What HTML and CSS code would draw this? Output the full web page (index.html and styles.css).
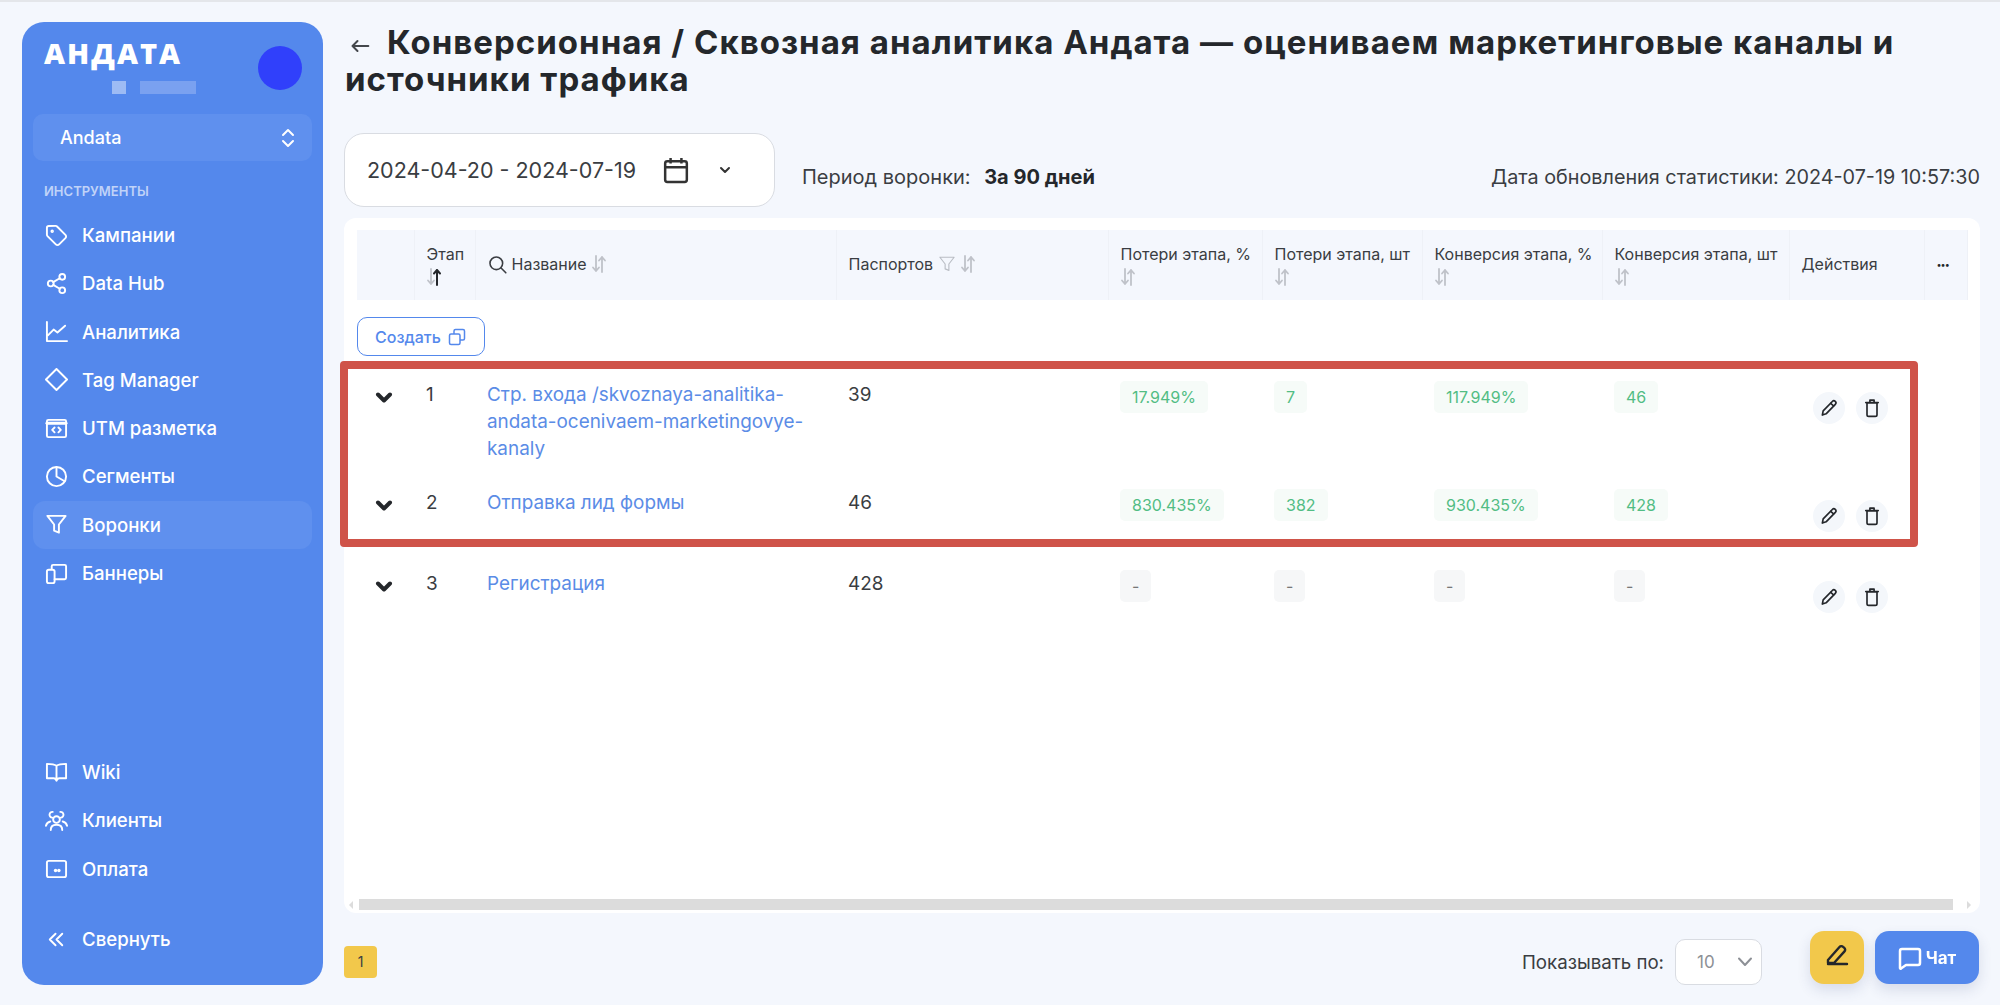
FILE: index.html
```html
<!DOCTYPE html>
<html lang="ru">
<head>
<meta charset="utf-8">
<title>Конверсионная / Сквозная аналитика</title>
<link rel="stylesheet" href="styles.css">
</head>
<body>
<svg class="sprite" aria-hidden="true">
  <symbol id="sort" viewBox="0 0 16 20"><path class="sort-down" d="M5 2v15M2 13.5 5 17l3-3.5"/><path class="sort-up" d="M11 18V3M8 6.5 11 3l3 3.5"/></symbol>
  <symbol id="sort-active" viewBox="0 0 16 20"><path class="sort-down" d="M5 2v15M2 13.5 5 17l3-3.5"/><path class="sort-up-dark" d="M11 18V3M8 6.5 11 3l3 3.5"/></symbol>
  <symbol id="chev" viewBox="0 0 18 12"><path d="M3 2.500 9 8.500l6-6"/></symbol>
  <symbol id="pencil" viewBox="0 0 24 24"><path d="M4 20.500l1-5L16 4.200a2.200 2.200 0 0 1 3.600 3.400L8.500 19z"/><path d="m14 6.500 3.500 3"/></symbol>
  <symbol id="trash" viewBox="0 0 24 24"><path d="M6 6h12v14a2 2 0 0 1-2 2H8a2 2 0 0 1-2-2zM4.500 5.500h15M9.500 5V2.500h5V5"/></symbol>
</svg>

<aside class="sidebar">
  <div class="brand">
    <div>
      <div class="logo">АНДАТА</div>
      <div class="blur-row"><span class="blur-a"></span><span class="blur-b"></span></div>
    </div>
    <span class="avatar"></span>
  </div>
  <div class="account">
    <span>Andata</span>
    <svg class="account-icon" viewBox="0 0 24 24"><path d="M7 9l5-5 5 5M7 15l5 5 5-5"/></svg>
  </div>
  <div class="nav-title">ИНСТРУМЕНТЫ</div>
  <nav class="nav">
    <a class="nav-item"><svg class="nav-icon" viewBox="0 0 24 24"><path d="M12.600 2.600A2 2 0 0 0 11.200 2H4a2 2 0 0 0-2 2v7.200a2 2 0 0 0 .6 1.400l8.700 8.700a2.400 2.400 0 0 0 3.400 0l6.600-6.600a2.400 2.400 0 0 0 0-3.400z"/><circle cx="7.500" cy="7.500" r=".8"/></svg>Кампании</a>
    <a class="nav-item"><svg class="nav-icon" viewBox="0 0 24 24"><circle cx="18" cy="5" r="3"/><circle cx="6" cy="12" r="3"/><circle cx="18" cy="19" r="3"/><path d="m8.600 13.500 6.800 4M15.400 6.500l-6.800 4"/></svg>Data Hub</a>
    <a class="nav-item"><svg class="nav-icon" viewBox="0 0 24 24"><path d="M2 2v20h21M3 16l6-6 4 3 8-7"/></svg>Аналитика</a>
    <a class="nav-item"><svg class="nav-icon" viewBox="0 0 24 24"><path d="M12 1 23 12 12 23 1 12Z"/></svg>Tag Manager</a>
    <a class="nav-item"><svg class="nav-icon" viewBox="0 0 24 24"><rect x="2" y="3" width="20" height="18" rx="1.500"/><path d="M2 6.500h20" class="thick"/><path d="m10 11-2.500 2.500L10 16M14 11l2.500 2.500L14 16"/></svg>UTM разметка</a>
    <a class="nav-item"><svg class="nav-icon" viewBox="0 0 24 24"><circle cx="12" cy="12" r="10"/><path d="M12 2v10l8.500 5"/></svg>Сегменты</a>
    <a class="nav-item nav-active"><svg class="nav-icon" viewBox="0 0 24 24"><path d="M2.500 3h19l-7 9v8.500l-5-2V12z"/></svg>Воронки</a>
    <a class="nav-item"><svg class="nav-icon" viewBox="0 0 24 24"><path d="M7 7V4.500A1.500 1.500 0 0 1 8.500 3h12A1.500 1.500 0 0 1 22 4.500v12a1.500 1.500 0 0 1-1.500 1.500H10"/><rect x="2" y="8" width="8" height="14" rx="2"/></svg>Баннеры</a>
  </nav>
  <nav class="nav nav-bottom">
    <a class="nav-item"><svg class="nav-icon" viewBox="0 0 24 24"><path d="M12 5v15M12 5c-2-1.500-5-2-10-2v15h7c1.500 0 2.500 1 3 2.500.5-1.500 1.500-2.500 3-2.500h7V3c-5 0-8 .5-10 2z"/></svg>Wiki</a>
    <a class="nav-item"><svg class="nav-icon" viewBox="0 0 24 24"><circle cx="12" cy="11" r="3.500"/><path d="M6 22c0-3.500 2.500-5.500 6-5.500s6 2 6 5.500M7.500 9A3 3 0 1 1 8 3M16.500 9A3 3 0 1 0 16 3M1 17.500C1.500 15 3 13.500 5.500 13M23 17.500c-.5-2.500-2-4-4.500-4.500"/></svg>Клиенты</a>
    <a class="nav-item"><svg class="nav-icon" viewBox="0 0 24 24"><rect x="2" y="4" width="20" height="17" rx="2"/><circle class="dot" cx="11" cy="14" r="1.800"/><circle class="dot" cx="14.500" cy="14" r="1.800"/></svg>Оплата</a>
    <a class="nav-item nav-collapse"><svg class="nav-icon" viewBox="0 0 24 24"><path d="M11 6l-6 6 6 6M18 6l-6 6 6 6"/></svg>Свернуть</a>
  </nav>
</aside>

<main class="main">
  <h1 class="title"><svg class="back" viewBox="0 0 24 24"><path d="M22 12H3M9 6l-6 6 6 6"/></svg>Конверсионная / Сквозная аналитика Андата — оцениваем маркетинговые каналы и источники трафика</h1>

  <div class="filters">
    <div class="date-box">
      <span>2024-04-20 - 2024-07-19</span>
      <svg class="calendar" viewBox="0 0 24 24"><rect x="2" y="4" width="20" height="19" rx="2"/><path d="M2 9.500h20M7 1v5M17 1v5"/></svg>
      <svg class="date-chev" viewBox="0 0 18 12"><path d="M5 4l4 4 4-4"/></svg>
    </div>
    <div class="period">Период воронки: <b>За 90 дней</b></div>
    <div class="updated">Дата обновления статистики: 2024-07-19 10:57:30</div>
  </div>

  <section class="card">
    <div class="table-wrap">
      <table class="table">
        <colgroup>
          <col class="c-exp"><col class="c-stage"><col class="c-name"><col class="c-pass">
          <col class="c-lp"><col class="c-ln"><col class="c-cp"><col class="c-cn">
          <col class="c-act"><col class="c-more">
        </colgroup>
        <thead>
          <tr>
            <th></th>
            <th>Этап<svg class="sort-icon"><use href="#sort-active"/></svg></th>
            <th><span class="th-inline"><svg class="search" viewBox="0 0 24 24"><circle cx="10.500" cy="10.500" r="8"/><path d="m16.500 16.500 6 6"/></svg>Название<svg class="sort-icon"><use href="#sort"/></svg></span></th>
            <th><span class="th-inline">Паспортов<svg class="th-filter" viewBox="0 0 24 24"><path d="M2.500 3h19l-7 9v8.500l-5-2V12z"/></svg><svg class="sort-icon"><use href="#sort"/></svg></span></th>
            <th>Потери этапа, %<svg class="sort-icon"><use href="#sort"/></svg></th>
            <th>Потери этапа, шт<svg class="sort-icon"><use href="#sort"/></svg></th>
            <th>Конверсия этапа, %<svg class="sort-icon"><use href="#sort"/></svg></th>
            <th>Конверсия этапа, шт<svg class="sort-icon"><use href="#sort"/></svg></th>
            <th>Действия</th>
            <th class="th-more">•••</th>
          </tr>
        </thead>
        <tbody>
          <tr>
            <td class="create-cell" colspan="10">
              <button class="create">Создать<svg class="create-icon" viewBox="0 0 24 24"><rect x="2" y="8" width="14" height="14" rx="2"/><path d="M8 8V4a2 2 0 0 1 2-2h10a2 2 0 0 1 2 2v10a2 2 0 0 1-2 2h-4"/></svg></button>
            </td>
          </tr>
          <tr>
            <td><svg class="expander"><use href="#chev"/></svg></td>
            <td>1</td>
            <td><a class="link">Стр. входа /skvoznaya-analitika-andata-ocenivaem-marketingovye-kanaly</a></td>
            <td>39</td>
            <td><span class="badge">17.949%</span></td>
            <td><span class="badge">7</span></td>
            <td><span class="badge">117.949%</span></td>
            <td><span class="badge">46</span></td>
            <td><div class="actions"><span class="act"><svg class="act-icon"><use href="#pencil"/></svg></span><span class="act"><svg class="act-icon"><use href="#trash"/></svg></span></div></td>
            <td></td>
          </tr>
          <tr>
            <td><svg class="expander"><use href="#chev"/></svg></td>
            <td>2</td>
            <td><a class="link">Отправка лид формы</a></td>
            <td>46</td>
            <td><span class="badge">830.435%</span></td>
            <td><span class="badge">382</span></td>
            <td><span class="badge">930.435%</span></td>
            <td><span class="badge">428</span></td>
            <td><div class="actions"><span class="act"><svg class="act-icon"><use href="#pencil"/></svg></span><span class="act"><svg class="act-icon"><use href="#trash"/></svg></span></div></td>
            <td></td>
          </tr>
          <tr>
            <td><svg class="expander"><use href="#chev"/></svg></td>
            <td>3</td>
            <td><a class="link">Регистрация</a></td>
            <td>428</td>
            <td><span class="badge badge-empty">-</span></td>
            <td><span class="badge badge-empty">-</span></td>
            <td><span class="badge badge-empty">-</span></td>
            <td><span class="badge badge-empty">-</span></td>
            <td><div class="actions"><span class="act"><svg class="act-icon"><use href="#pencil"/></svg></span><span class="act"><svg class="act-icon"><use href="#trash"/></svg></span></div></td>
            <td></td>
          </tr>
        </tbody>
      </table>
    </div>
    <div class="scrollbar">
      <span class="scroll-arrow scroll-left"></span>
      <span class="scroll-thumb"></span>
      <span class="scroll-arrow scroll-right"></span>
    </div>
    <div class="highlight"></div>
  </section>

  <footer class="footer">
    <span class="page-num">1</span>
    <div class="page-size">
      <span>Показывать по:</span>
      <div class="size-select"><span>10</span><svg class="size-chev" viewBox="0 0 18 12"><path d="M3 2.500l6 6.500 6-6.500"/></svg></div>
    </div>
  </footer>
</main>

<div class="floating">
  <button class="fab fab-note"><svg class="fab-icon" viewBox="0 0 24 24"><path d="M3 17 14.500 4a2.500 2.500 0 0 1 3.600-.2l1.200 1a2.500 2.500 0 0 1 .2 3.600L9 20H3zM3 21h19"/></svg></button>
  <button class="fab fab-chat"><svg class="chat-icon" viewBox="0 0 24 24"><path d="M2 5a2 2 0 0 1 2-2h16a2 2 0 0 1 2 2v12a2 2 0 0 1-2 2H8l-5 3.500a.6.600 0 0 1-1-.5z"/></svg>Чат</button>
</div>
</body>
</html>
```

FILE: styles.css
```css
* { box-sizing: border-box; }
html, body { height: 100%; }
body {
  margin: 0;
  height: 100vh;
  overflow: hidden;
  display: flex;
  gap: 21px;
  padding: 20px 20px 20px 22px;
  border-top: 2px solid #e4e6ea;
  background: #f4f7fd;
  font-family: Inter, "Noto Sans", sans-serif;
  color: #3a3d42;
}
.sprite { position: absolute; width: 0; height: 0; }

/* sidebar */
.sidebar {
  flex: 0 0 301px;
  display: flex;
  flex-direction: column;
  padding: 0 11px 22px;
  border-radius: 22px;
  background: #5488ec;
  color: #fff;
}
.brand {
  display: flex;
  justify-content: space-between;
  padding: 19px 10px 0 11px;
  height: 92px;
}
.logo {
  font-family: "Open Sans", Inter, sans-serif;
  font-size: 29px;
  font-weight: 800;
  line-height: 24px;
  letter-spacing: 2px;
}
.blur-row { display: flex; gap: 14px; margin: 16px 0 0 68px; }
.blur-a { width: 14px; height: 13px; background: #9dbbf4; }
.blur-b { width: 56px; height: 13px; background: #7aa1f0; }
.avatar {
  width: 44px;
  height: 44px;
  margin-top: 5px;
  border-radius: 50%;
  background: #3040fb;
}
.account {
  display: flex;
  align-items: center;
  justify-content: space-between;
  height: 47px;
  padding: 0 12px 0 27px;
  border-radius: 10px;
  background: #5f90ee;
  font-size: 18px;
  font-weight: 500;
}
.account-icon { width: 24px; height: 24px; fill: none; stroke: #fff; stroke-width: 2; stroke-linecap: round; stroke-linejoin: round; }
.nav-title {
  margin: 21px 0 0 11px;
  height: 18px;
  font-size: 13px;
  font-weight: 600;
  line-height: 18px;
  color: #c0d3f8;
}
.nav { display: flex; flex-direction: column; gap: 0.300px; margin-top: 11px; }
.nav-bottom { margin-top: auto; }
.nav-item {
  display: flex;
  align-items: center;
  gap: 14px;
  height: 48px;
  padding-left: 12px;
  border-radius: 12px;
  font-size: 18.600px;
  font-weight: 500;
  color: #fff;
}
.nav-active { background: #5f90ee; }
.nav-collapse { margin-top: 22px; }
.nav-icon { flex: none; width: 23px; height: 23px; fill: none; stroke: #fff; stroke-width: 2; stroke-linecap: round; stroke-linejoin: round; }
.nav-icon .dot { fill: #fff; stroke: none; }
.nav-icon .thick { stroke-width: 3; }

/* main */
.main {
  position: relative;
  flex: 1;
  min-width: 0;
  display: flex;
  flex-direction: column;
}
.title {
  margin: 2px 0 0;
  padding-left: 1px;
  font-size: 33px;
  font-weight: 700;
  line-height: 37px;
  letter-spacing: 1.020px;
  color: #24272b;
}
.back { width: 20px; height: 20px; margin: 0 17px 0 5px; vertical-align: -2px; fill: none; stroke: #44474c; stroke-width: 2.400; stroke-linecap: round; stroke-linejoin: round; }

.filters {
  display: flex;
  align-items: center;
  gap: 27px;
  margin-top: 35px;
  font-size: 20px;
  color: #3a3d42;
}
.date-box {
  display: flex;
  align-items: center;
  width: 431px;
  height: 74px;
  padding: 0 0 0 22px;
  border: 1px solid #d9dce2;
  border-radius: 20px;
  background: #fff;
  font-size: 21.500px;
  color: #3a3d42;
}
.calendar { width: 26px; height: 28px; margin-left: 27px; fill: none; stroke: #333; stroke-width: 2.300; }
.date-chev { width: 18px; height: 12px; margin-left: 27px; fill: none; stroke: #333; stroke-width: 2; stroke-linecap: round; stroke-linejoin: round; }
.period { padding-top: 14px; }
.period b { margin-left: 8px; font-weight: 700; color: #24272b; }
.updated { margin-left: auto; padding-top: 14px; font-size: 19.800px; }

/* card */
.card {
  position: relative;
  flex: 1;
  min-height: 0;
  display: flex;
  flex-direction: column;
  margin-top: 11px;
  padding: 12px 0 3px;
  border-radius: 12px;
  background: #fff;
}
.table-wrap { flex: 1; min-height: 0; padding-left: 13px; }
.table {
  width: 1610px;
  table-layout: fixed;
  border-collapse: collapse;
}
.c-exp { width: 57px; }
.c-stage { width: 61px; }
.c-name { width: 361px; }
.c-pass { width: 272px; }
.c-lp { width: 154px; }
.c-ln { width: 160px; }
.c-cp { width: 180px; }
.c-cn { width: 187px; }
.c-act { width: 135px; }
.c-more { width: 43px; }
.table th {
  height: 70px;
  padding: 0 0 2px 12px;
  background: #f4f7fd;
  border-right: 1px solid #eef1f7;
  font-size: 16px;
  font-weight: 400;
  line-height: 25px;
  text-align: left;
  color: #3a3d42;
  white-space: nowrap;
}
.th-inline { display: flex; align-items: center; gap: 5px; }
.table .th-more { font-size: 9px; letter-spacing: -1px; color: #24272b; }
.sort-icon { display: block; width: 16px; height: 20px; margin-left: -1px; fill: none; stroke: #bfc2c9; stroke-width: 1.800; stroke-linecap: round; stroke-linejoin: round; }
.th-inline .sort-icon { display: inline-block; }
.sort-down { stroke: #bfc2c9; }
.sort-up { stroke: #bfc2c9; }
.sort-up-dark { stroke: #24272b; stroke-width: 2; }
.search { width: 19px; height: 19px; fill: none; stroke: #3a3d42; stroke-width: 2; stroke-linecap: round; }
.th-filter { width: 18px; height: 18px; fill: none; stroke: #b9bdc4; stroke-width: 1.500; stroke-linejoin: round; }

.table td {
  height: 81px;
  padding: 13px 12px 14px;
  font-size: 18.900px;
  line-height: 27px;
  vertical-align: top;
  color: #3a3d42;
}
.table .create-cell { height: 68px; padding: 17px 0 0; }
.create {
  display: inline-flex;
  align-items: center;
  gap: 7px;
  width: 128px;
  height: 39px;
  padding: 0 0 0 17px;
  border: 1px solid #5488ec;
  border-radius: 10px;
  background: #fff;
  font: 500 16px Inter, sans-serif;
  color: #5488ec;
}
.create-icon { width: 18px; height: 18px; fill: none; stroke: #5488ec; stroke-width: 2; }
.expander { display: block; width: 18px; height: 12px; margin: 11px 0 0 6px; fill: none; stroke: #24272b; stroke-width: 4; stroke-linecap: round; stroke-linejoin: round; }
.link { color: #5b8ce6; }
.badge {
  display: inline-block;
  padding: 0 12px;
  height: 32px;
  border-radius: 5px;
  background: #f6fbf8;
  font-size: 16px;
  line-height: 32px;
  vertical-align: top;
  color: #52bd84;
}
.badge-empty { background: #f6f7f8; color: #777; }
.actions { display: flex; gap: 11px; margin: 11px 0 0 12px; }
.act { display: flex; align-items: center; justify-content: center; width: 32px; height: 32px; border-radius: 50%; background: #f4f7fb; }
.act-icon { width: 20px; height: 20px; fill: none; stroke: #24272b; stroke-width: 2; stroke-linecap: round; stroke-linejoin: round; }

/* scrollbar */
.scrollbar { display: flex; align-items: center; height: 11px; }
.scroll-thumb { width: 1594px; height: 11px; margin-left: 6px; background: #dcdcdc; }
.scroll-arrow { width: 0; height: 0; border-style: solid; border-color: transparent; }
.scroll-left { margin-left: 5px; border-width: 4px 4px 4px 0; border-right-color: #dcdcdc; }
.scroll-right { margin-left: 14px; border-width: 4px 0 4px 4px; border-left-color: #dcdcdc; }

/* highlight */
.highlight {
  position: absolute;
  top: 143px;
  left: -4px;
  width: 1578px;
  height: 186px;
  border: 8px solid #cf5349;
  border-radius: 4px;
  pointer-events: none;
}

/* footer */
.footer {
  display: flex;
  align-items: center;
  justify-content: space-between;
  height: 46px;
  margin-top: 26px;
  padding-right: 218px;
}
.page-num {
  width: 33px;
  height: 32px;
  border-radius: 4px;
  background: #f2c84b;
  font-size: 14px;
  line-height: 32px;
  text-align: center;
  color: #3a3d42;
}
.page-size { display: flex; align-items: center; gap: 11px; font-size: 18.700px; color: #3a3d42; }
.size-select {
  display: flex;
  align-items: center;
  justify-content: space-between;
  width: 87px;
  height: 46px;
  padding: 0 7px 0 21px;
  border: 1px solid #d9dce2;
  border-radius: 10px;
  background: #fff;
  font-size: 17px;
  color: #8d9096;
}
.size-chev { width: 18px; height: 12px; fill: none; stroke: #8d9096; stroke-width: 2; stroke-linecap: round; stroke-linejoin: round; }

/* floating */
.floating {
  position: fixed;
  right: 21px;
  bottom: 21px;
  display: flex;
  gap: 11px;
}
.fab {
  display: flex;
  align-items: center;
  justify-content: center;
  height: 53px;
  border: 0;
  border-radius: 14px;
  box-shadow: 0 6px 14px rgba(40, 60, 110, .14);
}
.fab-note { width: 54px; background: #f2c84b; }
.fab-icon { width: 24px; height: 24px; margin-bottom: 5px; fill: none; stroke: #24272b; stroke-width: 2.400; stroke-linecap: round; stroke-linejoin: round; }
.fab-chat {
  gap: 4px;
  width: 104px;
  background: #5488ec;
  font: 700 17px Inter, sans-serif;
  color: #fff;
}
.chat-icon { width: 24px; height: 24px; fill: none; stroke: #fff; stroke-width: 2.500; stroke-linejoin: round; }
```
